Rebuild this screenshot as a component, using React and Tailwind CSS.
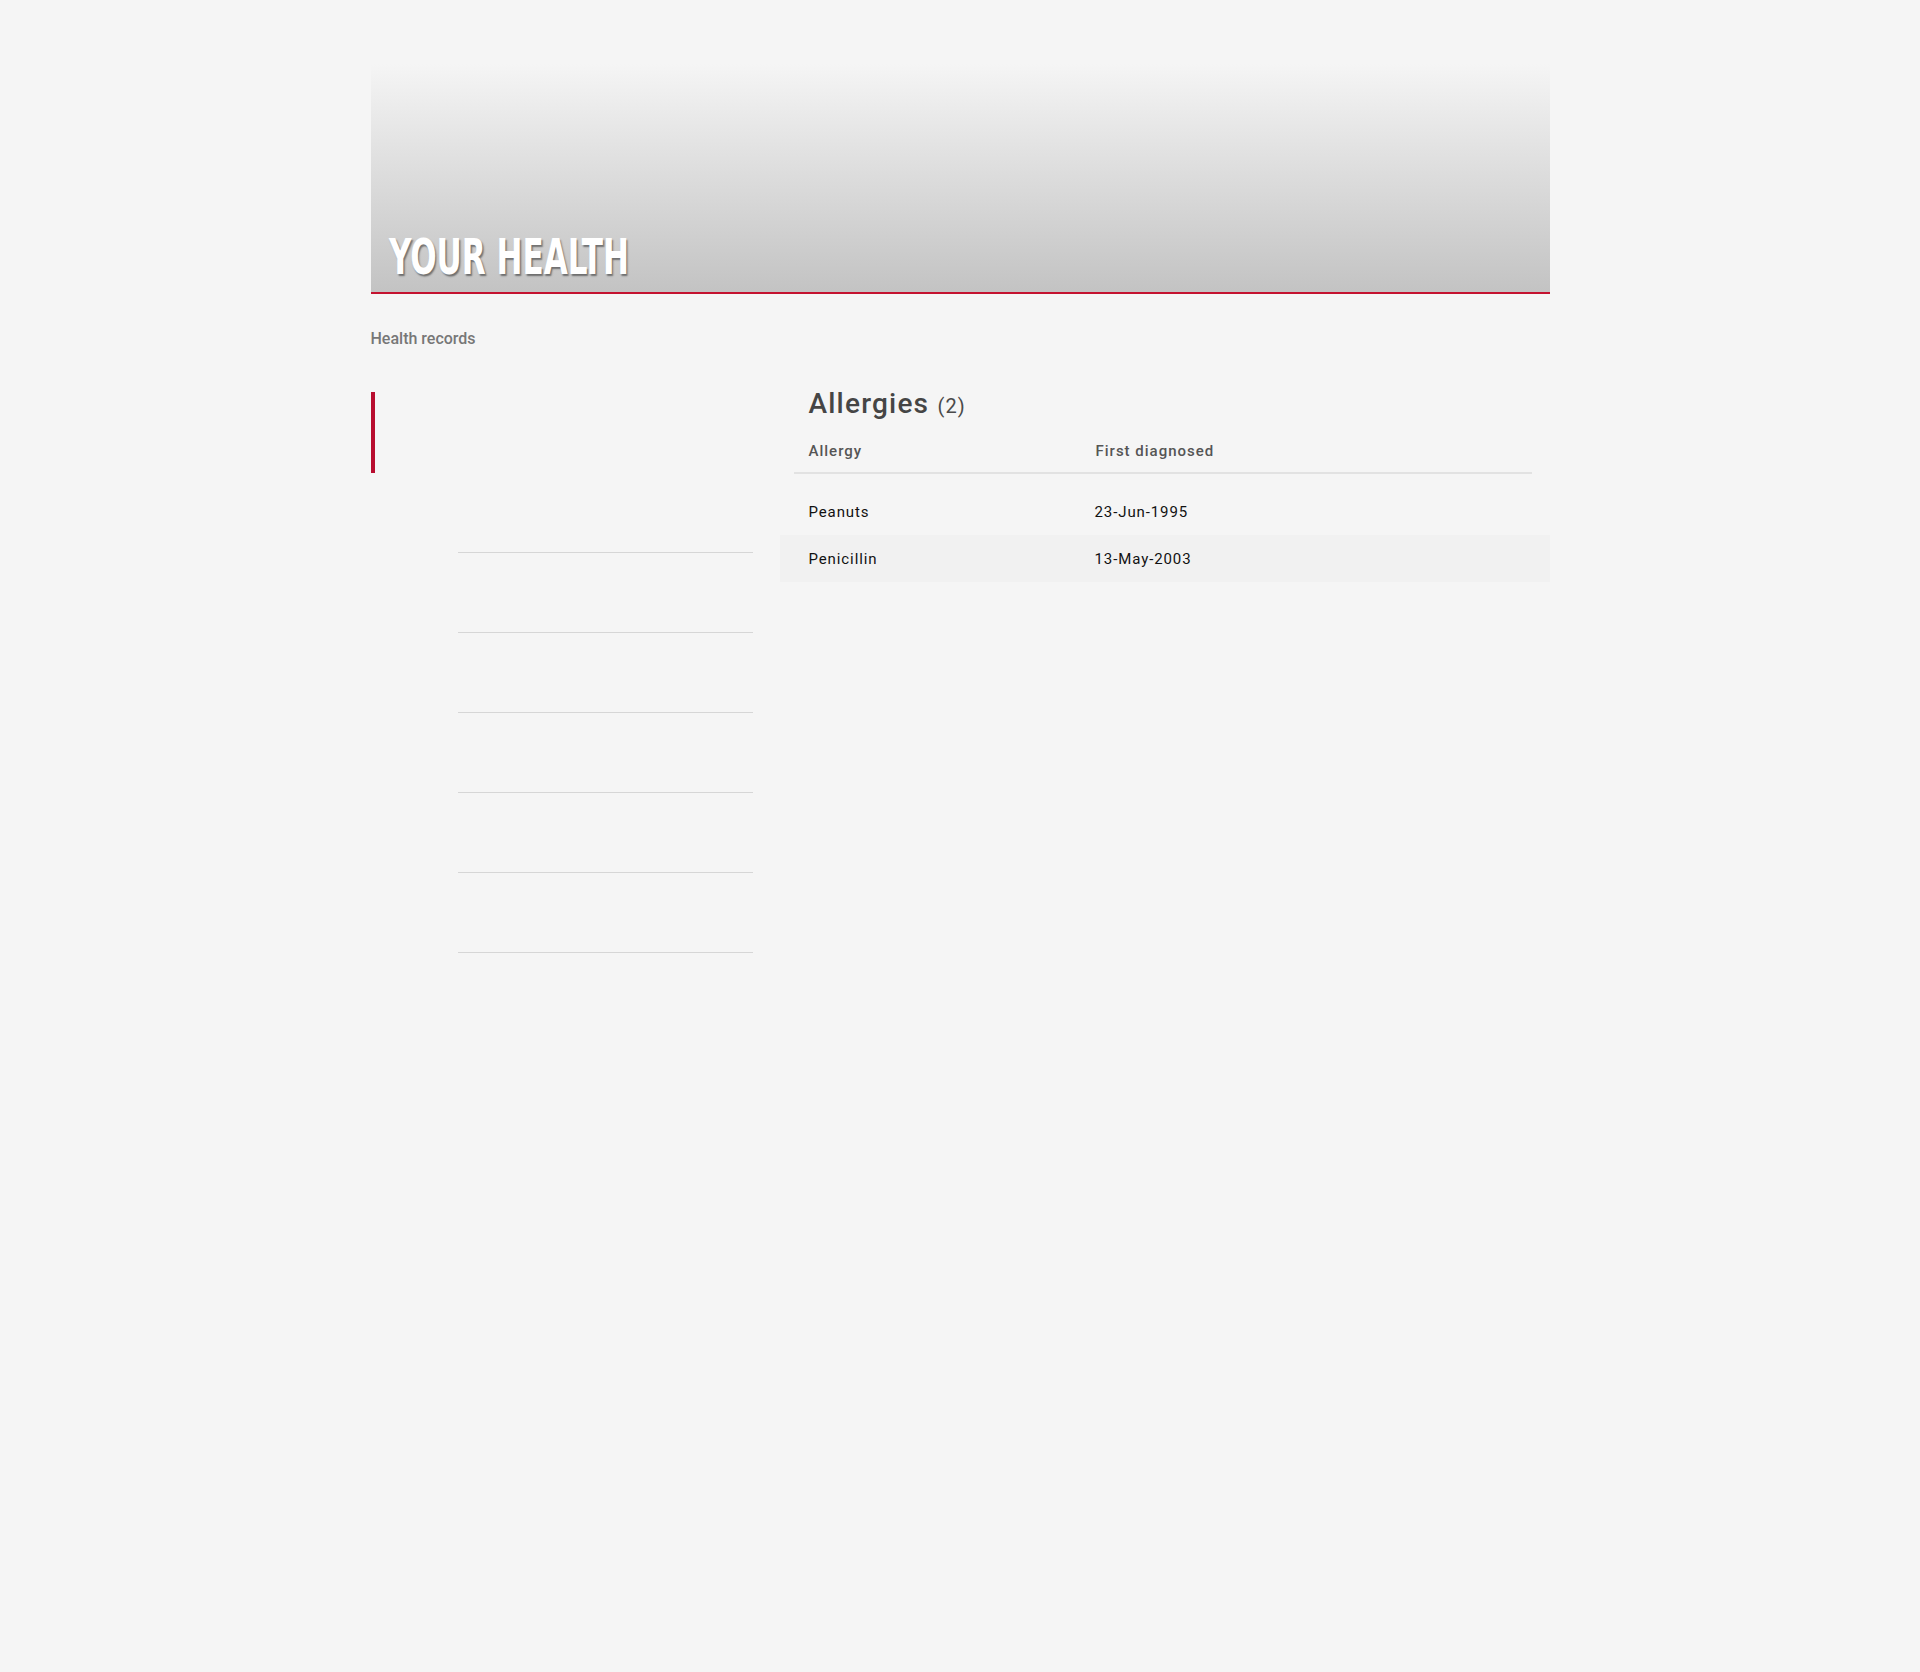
import React from 'react';

const allergies = [
   { name: 'Peanuts', diagnosed: '23-Jun-1995' },
   { name: 'Penicillin', diagnosed: '13-May-2003' },
];

const navItems = [1, 2, 3, 4, 5, 6];

function Sidebar() {
   return (
      <nav className="w-[382px] shrink-0">
         <div className="h-[81px] border-l-4 border-[#b80d2f]" />
         {navItems.map((item) => (
            <div
               key={item}
               className="ml-[87px] h-[80px] border-b border-[#d6d6d6]"
            />
         ))}
      </nav>
   );
}

function AllergyTable() {
   return (
      <section className="ml-[27px] flex-1">
         <h2 className="pl-[29px] text-[28px] leading-[24px] font-medium tracking-[1.2px] text-[#454545]">
            Allergies{' '}
            <span className="text-[20px] font-normal text-[#4a4a4a]">(2)</span>
         </h2>
         <div className="mx-[14px] mr-[18px] mt-[22px] border-b-2 border-[#e2e2e2] pb-[10px] pl-[15px]">
            <div className="grid grid-cols-[287px_1fr] text-[15px] leading-[22px] font-medium tracking-[1px] text-[#555]">
               <span>Allergy</span>
               <span>First diagnosed</span>
            </div>
         </div>
         <ul className="mt-[14px]">
            {allergies.map((a, i) => (
               <li
                  key={a.name}
                  className={`grid h-[47px] grid-cols-[287px_1fr] items-center pl-[29px] text-[15px] leading-[22px] font-normal tracking-[0.9px] text-[#111] ${
                     i % 2 === 1 ? 'bg-[#f1f1f1]' : ''
                  }`}
               >
                  <span>{a.name}</span>
                  <span className="-ml-px">{a.diagnosed}</span>
               </li>
            ))}
         </ul>
      </section>
   );
}

export default function App() {
   return (
      <div className="min-h-screen bg-[#f5f5f5] font-[Roboto,sans-serif]">
         <div className="mx-auto w-[1179px] pt-16">
            <header className="flex h-[230px] items-end border-b-2 border-[#c4122f] bg-gradient-to-b from-[#f5f5f5] to-[#c3c3c3] px-[18px] pb-[10px]">
               <h1 className="origin-left scale-x-[0.69] font-['Liberation_Sans_Narrow','DejaVu_Sans_Condensed',sans-serif] text-[50px] leading-[50px] font-bold whitespace-nowrap text-white [text-shadow:2px_2px_2px_rgba(0,0,0,0.45)]">
                  YOUR HEALTH
               </h1>
            </header>
            <p className="mt-[34px] text-[16px] leading-[22px] font-medium text-[#777]">
               Health records
            </p>
            <div className="mt-[42px] flex">
               <Sidebar />
               <AllergyTable />
            </div>
         </div>
      </div>
   );
}
